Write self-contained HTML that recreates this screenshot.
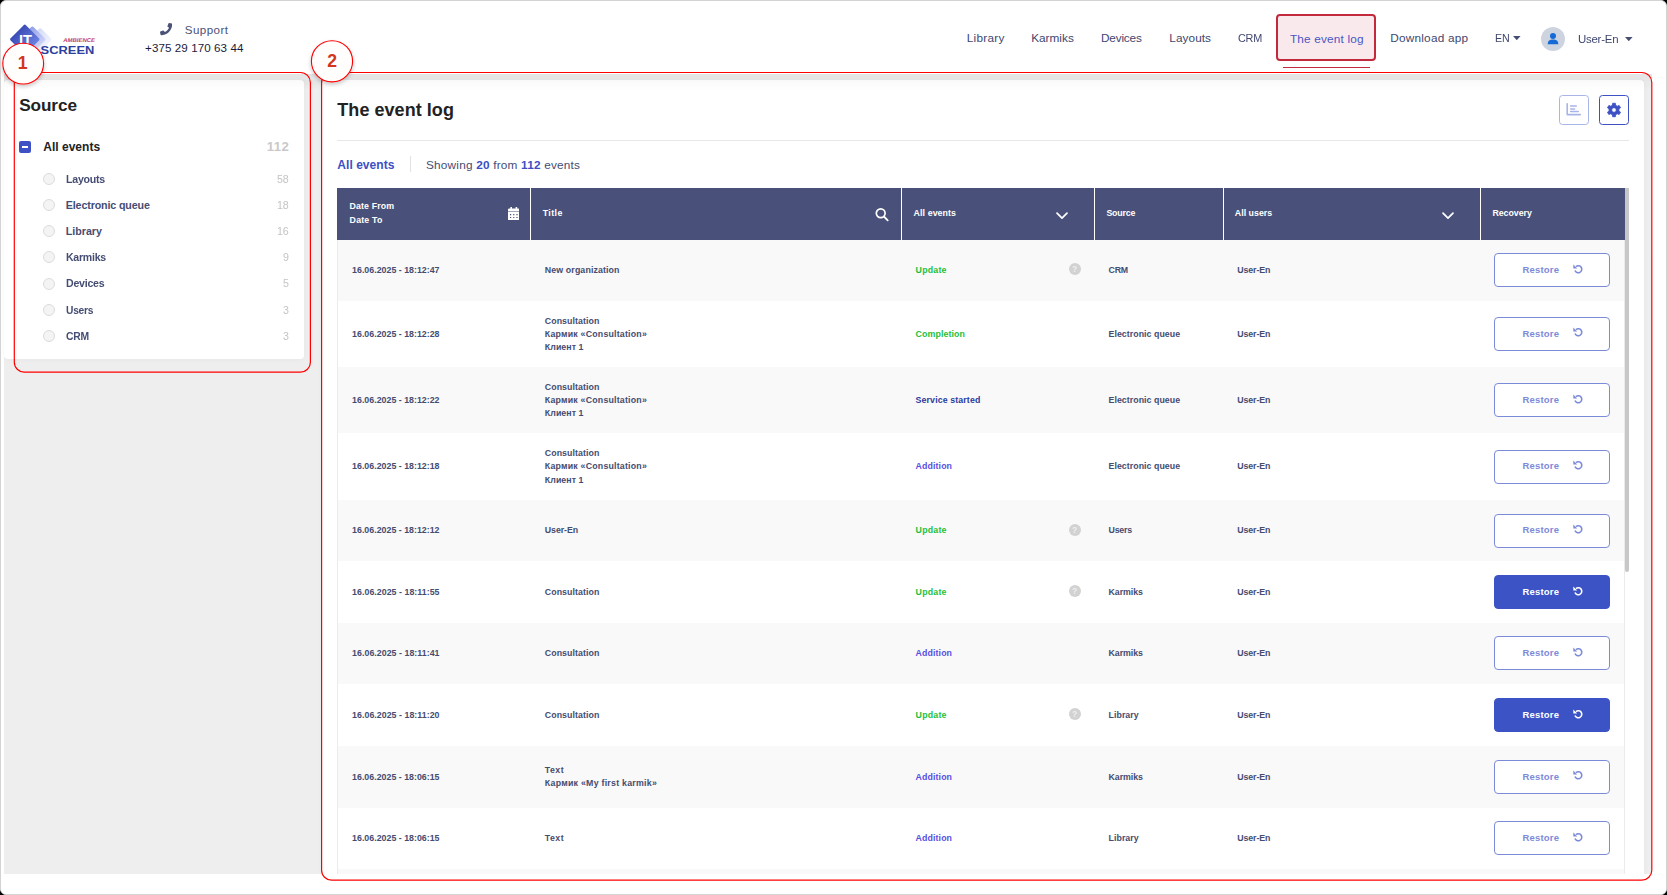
<!DOCTYPE html>
<html lang="en"><head><meta charset="utf-8"><title>The event log</title>
<style>
html,body{margin:0;padding:0;background:#000;}
body{width:1667px;height:895px;overflow:hidden;position:relative;font-family:"Liberation Sans",sans-serif;}
#frame{position:absolute;left:0;top:0;width:1665px;height:893px;border:1px solid #d3d3d3;border-radius:6px;background:#fff;overflow:hidden;}
#page{position:absolute;left:-1px;top:-1px;width:1667px;height:895px;}
.a{position:absolute;display:block;}
.t{position:absolute;white-space:pre;transform-origin:0 50%;display:block;}
.t b{font-weight:700;}
#bg{position:absolute;left:4px;top:74px;width:1648px;height:800px;background:#eeeeee;overflow:hidden;}
#side{position:absolute;left:4px;top:80px;width:300px;height:279px;background:#fff;border-radius:4px;box-shadow:0 0 6px rgba(0,0,0,.04);}
#main{position:absolute;left:322px;top:80px;width:1322px;height:820px;background:#fff;border-radius:4px;box-shadow:0 0 6px rgba(0,0,0,.04);}
.row{position:absolute;left:337px;width:1288px;}
.btn{position:absolute;left:1494px;width:114px;height:32px;border:1px solid #7c8bd9;border-radius:4px;background:#fff;}
.btn.f{background:#3c53c6;border-color:#3c53c6;}
.radio{position:absolute;left:43px;width:10px;height:10px;border:1px solid #dcdcdc;border-radius:50%;background:#f4f4f4;}
.help{position:absolute;left:1068.7px;width:12px;height:12px;border-radius:50%;background:#d2d2d2;color:#efefef;font-size:8.5px;font-weight:700;line-height:12px;text-align:center;}
.sep{position:absolute;top:188px;width:1.4px;height:51.8px;background:#fff;}
</style></head><body>
<div id="frame"><div id="page">

<div id="bg"><div class="a" style="left:0;top:0;width:1648px;height:16px;background:linear-gradient(rgba(0,0,0,.045),rgba(0,0,0,0))"></div></div>
<aside id="side"></aside>
<main id="main" style="height:794px;border-radius:4px 4px 0 0"></main>
<div class="a" style="left:4px;top:80px;width:1640px;height:10px;background:linear-gradient(rgba(0,0,0,.022),rgba(0,0,0,0));pointer-events:none"></div>
<svg class="a" style="left:4px;top:14px" width="100" height="50" viewBox="4 14 100 50">
<defs><linearGradient id="g1" x1="0" y1="0" x2="1" y2="0"><stop offset="0" stop-color="#3a4cb6"/><stop offset="1" stop-color="#6b80e2"/></linearGradient>
<linearGradient id="g2" x1="0" y1="0" x2="1" y2="0"><stop offset="0" stop-color="#93a0e8"/><stop offset="1" stop-color="#cdd4f6"/></linearGradient>
<linearGradient id="g3" x1="0" y1="0" x2="1" y2="0"><stop offset="0" stop-color="#d5dbf8"/><stop offset="1" stop-color="#f1f3fd"/></linearGradient></defs>
<rect x="-8.5" y="-8.5" width="17" height="17" rx="1.6" transform="translate(40.2 39.6) rotate(45)" fill="url(#g3)"/>
<rect x="-9.6" y="-9.6" width="19.2" height="19.2" rx="1.6" transform="translate(32.4 39.5) rotate(45)" fill="url(#g2)"/>
<rect x="-10.8" y="-10.8" width="21.6" height="21.6" rx="1.6" transform="translate(24.8 39.3) rotate(45)" fill="url(#g1)"/>
<text x="19.0" y="46.6" font-family="Liberation Sans,sans-serif" font-weight="700" font-size="16.5" fill="#fff" textLength="13" lengthAdjust="spacingAndGlyphs">IT</text>
<text x="63.1" y="41.9" font-family="Liberation Sans,sans-serif" font-weight="700" font-size="5.6" fill="#c2405c" transform="translate(8 0) skewX(-11)" textLength="31.8" lengthAdjust="spacingAndGlyphs">AMBIENCE</text>
<text x="40.6" y="53.9" font-family="Liberation Sans,sans-serif" font-weight="700" font-size="11.2" fill="#2c409f" textLength="53.7" lengthAdjust="spacingAndGlyphs">SCREEN</text>
</svg>
<svg class="a" style="left:160.2px;top:23.4px" width="12.2" height="12.2" viewBox="0 0 512 512"><path fill="#4a5278" d="M493.4 24.6l-104-24c-11.3-2.6-22.9 3.3-27.5 13.9l-48 112c-4.2 9.8-1.4 21.3 6.9 28l60.6 49.6c-36 76.7-98.9 140.5-177.2 177.2l-49.6-60.6c-6.8-8.3-18.2-11.1-28-6.9l-112 48C3.9 366.5-2 378.1.6 389.4l24 104C27.1 504.2 36.7 512 48 512c256.1 0 464-207.5 464-464 0-11.2-7.7-20.9-18.6-23.4z"/></svg>
<div class="a" style="left:1276px;top:14px;width:96px;height:42.7px;border:2px solid #c2293d;border-radius:4px;background:#f9e9ed"></div>
<div class="a" style="left:1283px;top:66.7px;width:87px;height:1px;background:#c2293d"></div>
<svg class="a" style="left:1513.4px;top:36px" width="7.6" height="4.2" viewBox="0 0 7.6 4.2"><path d="M0 0H7.6L3.8 4.2Z" fill="#454d73"/></svg>
<svg class="a" style="left:1625.4px;top:36.8px" width="7.6" height="4.2" viewBox="0 0 7.6 4.2"><path d="M0 0H7.6L3.8 4.2Z" fill="#454d73"/></svg>
<svg class="a" style="left:1541px;top:27px" width="24" height="24" viewBox="0 0 24 24"><circle cx="12" cy="12" r="12" fill="#ced4df"/>
<circle cx="12" cy="8.9" r="3.0" fill="#166ad8"/><path d="M6.7 17.3 C6.7 13.6 9 12.6 12 12.6 S17.3 13.6 17.3 17.3Z" fill="#166ad8"/></svg>
<div class="a" style="left:19.2px;top:140.8px;width:12px;height:12px;border-radius:2px;background:#3d50c4"></div>
<div class="a" style="left:22.4px;top:146px;width:5.6px;height:1.8px;background:#fff"></div>
<div class="radio" style="top:173.00px"></div>
<div class="radio" style="top:199.15px"></div>
<div class="radio" style="top:225.30px"></div>
<div class="radio" style="top:251.45px"></div>
<div class="radio" style="top:277.60px"></div>
<div class="radio" style="top:303.75px"></div>
<div class="radio" style="top:329.90px"></div>
<div class="a" style="left:337px;top:140px;width:1292px;height:1px;background:#e7e7e7"></div>
<div class="a" style="left:410px;top:156.3px;width:1px;height:16px;background:#e2e2e2"></div>
<div class="a" style="left:1559px;top:95px;width:28px;height:28px;border:1px solid #a9b4e7;border-radius:3.5px;background:#fff"></div>
<svg class="a" style="left:1566px;top:103px" width="15" height="14" viewBox="0 0 15 14"><path d="M1.2 0.8 V11.6 H14.3" fill="none" stroke="#a9b4e7" stroke-width="1.6" stroke-linecap="round" stroke-linejoin="round"/><path d="M4.6 3.1H10.3 M4.6 5.9H8.6 M4.6 8.6H12.2" stroke="#a9b4e7" stroke-width="1.5" stroke-linecap="round"/></svg>
<div class="a" style="left:1599px;top:95px;width:28px;height:28px;border:1px solid #3d50c4;border-radius:3.5px;background:#fff"></div>
<svg class="a" style="left:1604px;top:100px" width="20" height="20" viewBox="0 0 20 20"><path fill-rule="evenodd" fill="#3d50c4" stroke="#3d50c4" stroke-width="0.8" stroke-linejoin="round" d="M8.33 5.29 L8.63 3.24 L11.37 3.24 L11.67 5.29 L13.25 6.20 L15.17 5.43 L16.54 7.81 L14.92 9.09 L14.92 10.91 L16.54 12.19 L15.17 14.57 L13.25 13.80 L11.67 14.71 L11.37 16.76 L8.63 16.76 L8.33 14.71 L6.75 13.80 L4.83 14.57 L3.46 12.19 L5.08 10.91 L5.08 9.09 L3.46 7.81 L4.83 5.43 L6.75 6.20Z M7.70 10.00 a2.3 2.3 0 1 0 4.6 0 a2.3 2.3 0 1 0 -4.6 0Z"/></svg>
<div class="a" style="left:337px;top:188px;width:1288px;height:51.8px;background:#49517a"></div>
<div class="sep" style="left:529.8px"></div>
<div class="sep" style="left:900.8px"></div>
<div class="sep" style="left:1093.6px"></div>
<div class="sep" style="left:1222.8px"></div>
<div class="sep" style="left:1479.7px"></div>
<div class="row" style="top:239.8px;height:60.9px;background:#f9f9f9"></div>
<div class="row" style="top:300.7px;height:66.3px;background:#ffffff"></div>
<div class="row" style="top:367.0px;height:66.1px;background:#f9f9f9"></div>
<div class="row" style="top:433.1px;height:66.9px;background:#ffffff"></div>
<div class="row" style="top:500.0px;height:61.0px;background:#f9f9f9"></div>
<div class="row" style="top:561.0px;height:61.8px;background:#ffffff"></div>
<div class="row" style="top:622.8px;height:61.2px;background:#f9f9f9"></div>
<div class="row" style="top:684.0px;height:62.0px;background:#ffffff"></div>
<div class="row" style="top:746.0px;height:61.5px;background:#f9f9f9"></div>
<div class="row" style="top:807.5px;height:61.5px;background:#ffffff"></div>
<div class="row" style="top:869.0px;height:62.0px;background:#f9f9f9"></div>
<div class="a" style="left:337px;top:239.8px;width:1px;height:640px;background:#ebebeb"></div>
<div class="a" style="left:1624px;top:239.8px;width:1px;height:640px;background:#ebebeb"></div>
<div class="a" style="left:1625.4px;top:188px;width:3.6px;height:384px;background:#c7c7c7;border-radius:0 0 2px 2px"></div>
<svg class="a" style="left:507.8px;top:206.8px" width="11.6" height="13.4" viewBox="0 0 11.6 13.4"><path fill="#fff" fill-rule="evenodd" d="M2.4 0h1.6v1.6h3.6V0h1.6v1.6h1.2a1.2 1.2 0 0 1 1.2 1.2v1.6H0V2.8a1.2 1.2 0 0 1 1.2-1.2h1.2zM0 5h11.6v7.2a1.2 1.2 0 0 1-1.2 1.2H1.2a1.2 1.2 0 0 1-1.2-1.2zM2.0 7.0h1.2v1.2h-1.2zM5.2 7.0h1.2v1.2h-1.2zM8.4 7.0h1.2v1.2h-1.2zM2.0 9.9h1.2v1.2h-1.2zM5.2 9.9h1.2v1.2h-1.2zM8.4 9.9h1.2v1.2h-1.2z"/></svg>
<svg class="a" style="left:874px;top:207px" width="16" height="16" viewBox="0 0 16 16"><circle cx="6.7" cy="6.3" r="4.4" fill="none" stroke="#fff" stroke-width="1.7"/><path d="M9.9 9.5L13.7 13.3" stroke="#fff" stroke-width="1.8" stroke-linecap="round"/></svg>
<svg class="a" style="left:1054.8px;top:210.6px" width="14" height="10" viewBox="0 0 14 10"><path d="M2 2.2L7 7.2L12 2.2" fill="none" stroke="#fff" stroke-width="1.7" stroke-linecap="round" stroke-linejoin="round"/></svg>
<svg class="a" style="left:1441.2px;top:210.6px" width="14" height="10" viewBox="0 0 14 10"><path d="M2 2.2L7 7.2L12 2.2" fill="none" stroke="#fff" stroke-width="1.7" stroke-linecap="round" stroke-linejoin="round"/></svg>
<div class="help" style="top:263.25px">?</div>
<div class="btn" style="top:253.25px"></div>
<svg class="a" style="left:1572.6px;top:263.85px" width="10" height="10" viewBox="0 0 10 10"><path d="M3.0 2.6 A3.5 3.5 0 1 1 2.0 6.5" fill="none" stroke="#7c8bd9" stroke-width="1.6" stroke-linecap="butt"/><path d="M0.3 0.5 L0.3 4.4 L4.2 4.4 Z" fill="#7c8bd9"/></svg>
<div class="btn" style="top:316.85px"></div>
<svg class="a" style="left:1572.6px;top:327.45px" width="10" height="10" viewBox="0 0 10 10"><path d="M3.0 2.6 A3.5 3.5 0 1 1 2.0 6.5" fill="none" stroke="#7c8bd9" stroke-width="1.6" stroke-linecap="butt"/><path d="M0.3 0.5 L0.3 4.4 L4.2 4.4 Z" fill="#7c8bd9"/></svg>
<div class="btn" style="top:383.05px"></div>
<svg class="a" style="left:1572.6px;top:393.65px" width="10" height="10" viewBox="0 0 10 10"><path d="M3.0 2.6 A3.5 3.5 0 1 1 2.0 6.5" fill="none" stroke="#7c8bd9" stroke-width="1.6" stroke-linecap="butt"/><path d="M0.3 0.5 L0.3 4.4 L4.2 4.4 Z" fill="#7c8bd9"/></svg>
<div class="btn" style="top:449.55px"></div>
<svg class="a" style="left:1572.6px;top:460.15px" width="10" height="10" viewBox="0 0 10 10"><path d="M3.0 2.6 A3.5 3.5 0 1 1 2.0 6.5" fill="none" stroke="#7c8bd9" stroke-width="1.6" stroke-linecap="butt"/><path d="M0.3 0.5 L0.3 4.4 L4.2 4.4 Z" fill="#7c8bd9"/></svg>
<div class="help" style="top:523.50px">?</div>
<div class="btn" style="top:513.50px"></div>
<svg class="a" style="left:1572.6px;top:524.1px" width="10" height="10" viewBox="0 0 10 10"><path d="M3.0 2.6 A3.5 3.5 0 1 1 2.0 6.5" fill="none" stroke="#7c8bd9" stroke-width="1.6" stroke-linecap="butt"/><path d="M0.3 0.5 L0.3 4.4 L4.2 4.4 Z" fill="#7c8bd9"/></svg>
<div class="help" style="top:584.90px">?</div>
<div class="btn f" style="top:574.90px"></div>
<svg class="a" style="left:1572.6px;top:585.5px" width="10" height="10" viewBox="0 0 10 10"><path d="M3.0 2.6 A3.5 3.5 0 1 1 2.0 6.5" fill="none" stroke="#fff" stroke-width="1.6" stroke-linecap="butt"/><path d="M0.3 0.5 L0.3 4.4 L4.2 4.4 Z" fill="#fff"/></svg>
<div class="btn" style="top:636.40px"></div>
<svg class="a" style="left:1572.6px;top:647.0px" width="10" height="10" viewBox="0 0 10 10"><path d="M3.0 2.6 A3.5 3.5 0 1 1 2.0 6.5" fill="none" stroke="#7c8bd9" stroke-width="1.6" stroke-linecap="butt"/><path d="M0.3 0.5 L0.3 4.4 L4.2 4.4 Z" fill="#7c8bd9"/></svg>
<div class="help" style="top:708.00px">?</div>
<div class="btn f" style="top:698.00px"></div>
<svg class="a" style="left:1572.6px;top:708.6px" width="10" height="10" viewBox="0 0 10 10"><path d="M3.0 2.6 A3.5 3.5 0 1 1 2.0 6.5" fill="none" stroke="#fff" stroke-width="1.6" stroke-linecap="butt"/><path d="M0.3 0.5 L0.3 4.4 L4.2 4.4 Z" fill="#fff"/></svg>
<div class="btn" style="top:759.75px"></div>
<svg class="a" style="left:1572.6px;top:770.35px" width="10" height="10" viewBox="0 0 10 10"><path d="M3.0 2.6 A3.5 3.5 0 1 1 2.0 6.5" fill="none" stroke="#7c8bd9" stroke-width="1.6" stroke-linecap="butt"/><path d="M0.3 0.5 L0.3 4.4 L4.2 4.4 Z" fill="#7c8bd9"/></svg>
<div class="btn" style="top:821.25px"></div>
<svg class="a" style="left:1572.6px;top:831.85px" width="10" height="10" viewBox="0 0 10 10"><path d="M3.0 2.6 A3.5 3.5 0 1 1 2.0 6.5" fill="none" stroke="#7c8bd9" stroke-width="1.6" stroke-linecap="butt"/><path d="M0.3 0.5 L0.3 4.4 L4.2 4.4 Z" fill="#7c8bd9"/></svg>
<div class="a" style="left:1px;top:874px;width:1665px;height:20px;background:#fff"></div>
<span class="t" style="left:184.70px;top:22px;font-size:11.6px;line-height:16px;letter-spacing:0.465px;color:#4a5278;">Support</span>
<span class="t" style="left:145.10px;top:40px;font-size:11.6px;line-height:16px;letter-spacing:0.079px;color:#1b1b3a;">+375 29 170 63 44</span>
<span class="t" style="left:966.70px;top:30px;font-size:11.8px;line-height:17px;letter-spacing:0.256px;color:#40476f;">Library</span>
<span class="t" style="left:1031.20px;top:30px;font-size:11.8px;line-height:17px;letter-spacing:-0.002px;color:#40476f;">Karmiks</span>
<span class="t" style="left:1100.90px;top:30px;font-size:11.8px;line-height:17px;letter-spacing:-0.161px;color:#40476f;">Devices</span>
<span class="t" style="left:1169.30px;top:30px;font-size:11.8px;line-height:17px;letter-spacing:0.062px;color:#40476f;">Layouts</span>
<span class="t" style="left:1238.20px;top:30px;font-size:11.8px;line-height:17px;letter-spacing:-0.250px;color:#40476f;transform:scaleX(0.9213);">CRM</span>
<span class="t" style="left:1290.00px;top:31px;font-size:11.8px;line-height:17px;letter-spacing:0.168px;color:#4a56c2;">The event log</span>
<span class="t" style="left:1390.30px;top:30px;font-size:11.8px;line-height:17px;letter-spacing:0.206px;color:#40476f;">Download app</span>
<span class="t" style="left:1495.40px;top:30px;font-size:11.8px;line-height:17px;letter-spacing:-0.250px;color:#40476f;transform:scaleX(0.9045);">EN</span>
<span class="t" style="left:1577.50px;top:31px;font-size:11.8px;line-height:17px;letter-spacing:-0.250px;color:#40476f;transform:scaleX(0.9697);">User-En</span>
<span class="t" style="left:19.20px;top:93px;font-size:17.2px;line-height:24px;letter-spacing:-0.096px;color:#222222;font-weight:700;">Source</span>
<span class="t" style="left:43.20px;top:139px;font-size:12.0px;line-height:17px;letter-spacing:0.022px;color:#222222;font-weight:700;">All events</span>
<span class="t" style="left:266.80px;top:138px;font-size:13.2px;line-height:18px;letter-spacing:0.409px;color:#c9c9c9;font-weight:700;">112</span>
<span class="t" style="left:65.80px;top:172px;font-size:10.7px;line-height:15px;letter-spacing:-0.250px;color:#454d73;font-weight:700;transform:scaleX(0.9928);">Layouts</span>
<span class="t" style="left:277.20px;top:172px;font-size:10.8px;line-height:15px;letter-spacing:-0.250px;color:#c4c4c4;transform:scaleX(0.9859);">58</span>
<span class="t" style="left:65.80px;top:198px;font-size:10.7px;line-height:15px;letter-spacing:-0.135px;color:#454d73;font-weight:700;">Electronic queue</span>
<span class="t" style="left:277.20px;top:198px;font-size:10.8px;line-height:15px;letter-spacing:-0.250px;color:#c4c4c4;transform:scaleX(0.9859);">18</span>
<span class="t" style="left:65.80px;top:224px;font-size:10.7px;line-height:15px;letter-spacing:-0.022px;color:#454d73;font-weight:700;">Library</span>
<span class="t" style="left:277.20px;top:224px;font-size:10.8px;line-height:15px;letter-spacing:-0.250px;color:#c4c4c4;transform:scaleX(0.9859);">16</span>
<span class="t" style="left:65.80px;top:250px;font-size:10.7px;line-height:15px;letter-spacing:-0.250px;color:#454d73;font-weight:700;transform:scaleX(0.9856);">Karmiks</span>
<span class="t" style="left:282.78px;top:250px;font-size:10.8px;line-height:15px;letter-spacing:-0.250px;color:#c4c4c4;transform:scaleX(0.9859);">9</span>
<span class="t" style="left:65.80px;top:276px;font-size:10.7px;line-height:15px;letter-spacing:-0.250px;color:#454d73;font-weight:700;transform:scaleX(0.9917);">Devices</span>
<span class="t" style="left:282.78px;top:276px;font-size:10.8px;line-height:15px;letter-spacing:-0.250px;color:#c4c4c4;transform:scaleX(0.9859);">5</span>
<span class="t" style="left:65.80px;top:303px;font-size:10.7px;line-height:15px;letter-spacing:-0.250px;color:#454d73;font-weight:700;transform:scaleX(0.9576);">Users</span>
<span class="t" style="left:282.78px;top:303px;font-size:10.8px;line-height:15px;letter-spacing:-0.250px;color:#c4c4c4;transform:scaleX(0.9859);">3</span>
<span class="t" style="left:65.80px;top:329px;font-size:10.7px;line-height:15px;letter-spacing:-0.250px;color:#454d73;font-weight:700;transform:scaleX(0.9688);">CRM</span>
<span class="t" style="left:282.78px;top:329px;font-size:10.8px;line-height:15px;letter-spacing:-0.250px;color:#c4c4c4;transform:scaleX(0.9859);">3</span>
<span class="t" style="left:337.30px;top:98px;font-size:18.0px;line-height:25px;letter-spacing:0.049px;color:#222222;font-weight:700;">The event log</span>
<span class="t" style="left:337.30px;top:157px;font-size:12.0px;line-height:17px;letter-spacing:0.044px;color:#3c4fc4;font-weight:700;">All events</span>
<span class="t" style="left:426.00px;top:157px;font-size:11.8px;line-height:17px;letter-spacing:0.200px;color:#454d73;">Showing <b style="color:#3c4fc4">20</b> from <b style="color:#3c4fc4">112</b> events</span>
<span class="t" style="left:349.60px;top:200px;font-size:8.8px;line-height:12px;letter-spacing:0.111px;color:#fff;font-weight:700;">Date From</span>
<span class="t" style="left:349.60px;top:214px;font-size:8.8px;line-height:12px;letter-spacing:0.198px;color:#fff;font-weight:700;">Date To</span>
<span class="t" style="left:542.70px;top:207px;font-size:8.8px;line-height:12px;letter-spacing:0.441px;color:#fff;font-weight:700;">Title</span>
<span class="t" style="left:913.60px;top:207px;font-size:8.8px;line-height:12px;letter-spacing:0.093px;color:#fff;font-weight:700;">All events</span>
<span class="t" style="left:1106.40px;top:207px;font-size:8.8px;line-height:12px;letter-spacing:-0.166px;color:#fff;font-weight:700;">Source</span>
<span class="t" style="left:1234.80px;top:207px;font-size:8.8px;line-height:12px;letter-spacing:0.029px;color:#fff;font-weight:700;">All users</span>
<span class="t" style="left:1492.40px;top:207px;font-size:8.8px;line-height:12px;letter-spacing:-0.032px;color:#fff;font-weight:700;">Recovery</span>
<span class="t" style="left:352.10px;top:264px;font-size:8.8px;line-height:12px;letter-spacing:0.017px;color:#454c70;font-weight:700;">16.06.2025 - 18:12:47</span>
<span class="t" style="left:544.80px;top:264px;font-size:8.8px;line-height:12px;letter-spacing:0.125px;color:#454c70;font-weight:700;">New organization</span>
<span class="t" style="left:915.60px;top:264px;font-size:8.8px;line-height:12px;letter-spacing:0.214px;color:#1cc040;font-weight:700;">Update</span>
<span class="t" style="left:1108.50px;top:264px;font-size:8.8px;line-height:12px;letter-spacing:-0.173px;color:#454c70;font-weight:700;">CRM</span>
<span class="t" style="left:1237.20px;top:264px;font-size:8.8px;line-height:12px;letter-spacing:-0.072px;color:#454c70;font-weight:700;">User-En</span>
<span class="t" style="left:1522.40px;top:263px;font-size:9.5px;line-height:13px;letter-spacing:0.204px;color:#7c8bd9;font-weight:700;">Restore</span>
<span class="t" style="left:352.10px;top:328px;font-size:8.8px;line-height:12px;letter-spacing:0.017px;color:#454c70;font-weight:700;">16.06.2025 - 18:12:28</span>
<span class="t" style="left:544.80px;top:315px;font-size:8.8px;line-height:12px;letter-spacing:0.076px;color:#454c70;font-weight:700;">Consultation</span>
<span class="t" style="left:544.80px;top:328px;font-size:8.8px;line-height:12px;letter-spacing:0.203px;color:#454c70;font-weight:700;">Кармик «Consultation»</span>
<span class="t" style="left:544.80px;top:341px;font-size:8.8px;line-height:12px;letter-spacing:0.069px;color:#454c70;font-weight:700;">Клиент 1</span>
<span class="t" style="left:915.60px;top:328px;font-size:8.8px;line-height:12px;letter-spacing:0.090px;color:#1cc040;font-weight:700;">Completion</span>
<span class="t" style="left:1108.50px;top:328px;font-size:8.8px;line-height:12px;letter-spacing:0.047px;color:#454c70;font-weight:700;">Electronic queue</span>
<span class="t" style="left:1237.20px;top:328px;font-size:8.8px;line-height:12px;letter-spacing:-0.072px;color:#454c70;font-weight:700;">User-En</span>
<span class="t" style="left:1522.40px;top:327px;font-size:9.5px;line-height:13px;letter-spacing:0.204px;color:#7c8bd9;font-weight:700;">Restore</span>
<span class="t" style="left:352.10px;top:394px;font-size:8.8px;line-height:12px;letter-spacing:0.017px;color:#454c70;font-weight:700;">16.06.2025 - 18:12:22</span>
<span class="t" style="left:544.80px;top:381px;font-size:8.8px;line-height:12px;letter-spacing:0.076px;color:#454c70;font-weight:700;">Consultation</span>
<span class="t" style="left:544.80px;top:394px;font-size:8.8px;line-height:12px;letter-spacing:0.203px;color:#454c70;font-weight:700;">Кармик «Consultation»</span>
<span class="t" style="left:544.80px;top:407px;font-size:8.8px;line-height:12px;letter-spacing:0.069px;color:#454c70;font-weight:700;">Клиент 1</span>
<span class="t" style="left:915.60px;top:394px;font-size:8.8px;line-height:12px;letter-spacing:0.115px;color:#2c3b9e;font-weight:700;">Service started</span>
<span class="t" style="left:1108.50px;top:394px;font-size:8.8px;line-height:12px;letter-spacing:0.047px;color:#454c70;font-weight:700;">Electronic queue</span>
<span class="t" style="left:1237.20px;top:394px;font-size:8.8px;line-height:12px;letter-spacing:-0.072px;color:#454c70;font-weight:700;">User-En</span>
<span class="t" style="left:1522.40px;top:393px;font-size:9.5px;line-height:13px;letter-spacing:0.204px;color:#7c8bd9;font-weight:700;">Restore</span>
<span class="t" style="left:352.10px;top:460px;font-size:8.8px;line-height:12px;letter-spacing:0.017px;color:#454c70;font-weight:700;">16.06.2025 - 18:12:18</span>
<span class="t" style="left:544.80px;top:447px;font-size:8.8px;line-height:12px;letter-spacing:0.076px;color:#454c70;font-weight:700;">Consultation</span>
<span class="t" style="left:544.80px;top:460px;font-size:8.8px;line-height:12px;letter-spacing:0.203px;color:#454c70;font-weight:700;">Кармик «Consultation»</span>
<span class="t" style="left:544.80px;top:474px;font-size:8.8px;line-height:12px;letter-spacing:0.069px;color:#454c70;font-weight:700;">Клиент 1</span>
<span class="t" style="left:915.60px;top:460px;font-size:8.8px;line-height:12px;letter-spacing:0.104px;color:#5a50e0;font-weight:700;">Addition</span>
<span class="t" style="left:1108.50px;top:460px;font-size:8.8px;line-height:12px;letter-spacing:0.047px;color:#454c70;font-weight:700;">Electronic queue</span>
<span class="t" style="left:1237.20px;top:460px;font-size:8.8px;line-height:12px;letter-spacing:-0.072px;color:#454c70;font-weight:700;">User-En</span>
<span class="t" style="left:1522.40px;top:459px;font-size:9.5px;line-height:13px;letter-spacing:0.204px;color:#7c8bd9;font-weight:700;">Restore</span>
<span class="t" style="left:352.10px;top:524px;font-size:8.8px;line-height:12px;letter-spacing:0.017px;color:#454c70;font-weight:700;">16.06.2025 - 18:12:12</span>
<span class="t" style="left:544.80px;top:524px;font-size:8.8px;line-height:12px;letter-spacing:-0.072px;color:#454c70;font-weight:700;">User-En</span>
<span class="t" style="left:915.60px;top:524px;font-size:8.8px;line-height:12px;letter-spacing:0.214px;color:#1cc040;font-weight:700;">Update</span>
<span class="t" style="left:1108.50px;top:524px;font-size:8.8px;line-height:12px;letter-spacing:-0.217px;color:#454c70;font-weight:700;">Users</span>
<span class="t" style="left:1237.20px;top:524px;font-size:8.8px;line-height:12px;letter-spacing:-0.072px;color:#454c70;font-weight:700;">User-En</span>
<span class="t" style="left:1522.40px;top:523px;font-size:9.5px;line-height:13px;letter-spacing:0.204px;color:#7c8bd9;font-weight:700;">Restore</span>
<span class="t" style="left:352.10px;top:586px;font-size:8.8px;line-height:12px;letter-spacing:0.041px;color:#454c70;font-weight:700;">16.06.2025 - 18:11:55</span>
<span class="t" style="left:544.80px;top:586px;font-size:8.8px;line-height:12px;letter-spacing:0.076px;color:#454c70;font-weight:700;">Consultation</span>
<span class="t" style="left:915.60px;top:586px;font-size:8.8px;line-height:12px;letter-spacing:0.214px;color:#1cc040;font-weight:700;">Update</span>
<span class="t" style="left:1108.50px;top:586px;font-size:8.8px;line-height:12px;letter-spacing:-0.056px;color:#454c70;font-weight:700;">Karmiks</span>
<span class="t" style="left:1237.20px;top:586px;font-size:8.8px;line-height:12px;letter-spacing:-0.072px;color:#454c70;font-weight:700;">User-En</span>
<span class="t" style="left:1522.40px;top:585px;font-size:9.5px;line-height:13px;letter-spacing:0.204px;color:#fff;font-weight:700;">Restore</span>
<span class="t" style="left:352.10px;top:647px;font-size:8.8px;line-height:12px;letter-spacing:0.041px;color:#454c70;font-weight:700;">16.06.2025 - 18:11:41</span>
<span class="t" style="left:544.80px;top:647px;font-size:8.8px;line-height:12px;letter-spacing:0.076px;color:#454c70;font-weight:700;">Consultation</span>
<span class="t" style="left:915.60px;top:647px;font-size:8.8px;line-height:12px;letter-spacing:0.104px;color:#5a50e0;font-weight:700;">Addition</span>
<span class="t" style="left:1108.50px;top:647px;font-size:8.8px;line-height:12px;letter-spacing:-0.056px;color:#454c70;font-weight:700;">Karmiks</span>
<span class="t" style="left:1237.20px;top:647px;font-size:8.8px;line-height:12px;letter-spacing:-0.072px;color:#454c70;font-weight:700;">User-En</span>
<span class="t" style="left:1522.40px;top:646px;font-size:9.5px;line-height:13px;letter-spacing:0.204px;color:#7c8bd9;font-weight:700;">Restore</span>
<span class="t" style="left:352.10px;top:709px;font-size:8.8px;line-height:12px;letter-spacing:0.041px;color:#454c70;font-weight:700;">16.06.2025 - 18:11:20</span>
<span class="t" style="left:544.80px;top:709px;font-size:8.8px;line-height:12px;letter-spacing:0.076px;color:#454c70;font-weight:700;">Consultation</span>
<span class="t" style="left:915.60px;top:709px;font-size:8.8px;line-height:12px;letter-spacing:0.214px;color:#1cc040;font-weight:700;">Update</span>
<span class="t" style="left:1108.50px;top:709px;font-size:8.8px;line-height:12px;letter-spacing:0.062px;color:#454c70;font-weight:700;">Library</span>
<span class="t" style="left:1237.20px;top:709px;font-size:8.8px;line-height:12px;letter-spacing:-0.072px;color:#454c70;font-weight:700;">User-En</span>
<span class="t" style="left:1522.40px;top:708px;font-size:9.5px;line-height:13px;letter-spacing:0.204px;color:#fff;font-weight:700;">Restore</span>
<span class="t" style="left:352.10px;top:771px;font-size:8.8px;line-height:12px;letter-spacing:0.017px;color:#454c70;font-weight:700;">16.06.2025 - 18:06:15</span>
<span class="t" style="left:544.80px;top:764px;font-size:8.8px;line-height:12px;letter-spacing:0.454px;color:#454c70;font-weight:700;">Text</span>
<span class="t" style="left:544.80px;top:777px;font-size:8.8px;line-height:12px;letter-spacing:0.249px;color:#454c70;font-weight:700;">Кармик «My first karmik»</span>
<span class="t" style="left:915.60px;top:771px;font-size:8.8px;line-height:12px;letter-spacing:0.104px;color:#5a50e0;font-weight:700;">Addition</span>
<span class="t" style="left:1108.50px;top:771px;font-size:8.8px;line-height:12px;letter-spacing:-0.056px;color:#454c70;font-weight:700;">Karmiks</span>
<span class="t" style="left:1237.20px;top:771px;font-size:8.8px;line-height:12px;letter-spacing:-0.072px;color:#454c70;font-weight:700;">User-En</span>
<span class="t" style="left:1522.40px;top:770px;font-size:9.5px;line-height:13px;letter-spacing:0.204px;color:#7c8bd9;font-weight:700;">Restore</span>
<span class="t" style="left:352.10px;top:832px;font-size:8.8px;line-height:12px;letter-spacing:0.017px;color:#454c70;font-weight:700;">16.06.2025 - 18:06:15</span>
<span class="t" style="left:544.80px;top:832px;font-size:8.8px;line-height:12px;letter-spacing:0.454px;color:#454c70;font-weight:700;">Text</span>
<span class="t" style="left:915.60px;top:832px;font-size:8.8px;line-height:12px;letter-spacing:0.104px;color:#5a50e0;font-weight:700;">Addition</span>
<span class="t" style="left:1108.50px;top:832px;font-size:8.8px;line-height:12px;letter-spacing:0.062px;color:#454c70;font-weight:700;">Library</span>
<span class="t" style="left:1237.20px;top:832px;font-size:8.8px;line-height:12px;letter-spacing:-0.072px;color:#454c70;font-weight:700;">User-En</span>
<span class="t" style="left:1522.40px;top:831px;font-size:9.5px;line-height:13px;letter-spacing:0.204px;color:#7c8bd9;font-weight:700;">Restore</span>
<svg class="a" style="left:0;top:0" width="1667" height="895" viewBox="0 0 1667 895">
<defs><filter id="sh" x="-30%" y="-30%" width="160%" height="160%"><feGaussianBlur in="SourceAlpha" stdDeviation="2.2"/><feOffset dy="1.5"/><feComponentTransfer><feFuncA type="linear" slope="0.22"/></feComponentTransfer><feMerge><feMergeNode/><feMergeNode in="SourceGraphic"/></feMerge></filter></defs>
<rect x="14.3" y="72.5" width="296.1" height="299.7" rx="10" fill="none" stroke="#ff0000" stroke-width="1.2"/>
<rect x="321.6" y="72.5" width="1330.2" height="807.7" rx="10" fill="none" stroke="#ff0000" stroke-width="1.2"/>
<circle cx="23.2" cy="63.6" r="20.4" fill="#fffefc" stroke="#ff0000" stroke-width="1.1" filter="url(#sh)"/>
<circle cx="332" cy="61.3" r="20.6" fill="#fffefc" stroke="#ff0000" stroke-width="1.1" filter="url(#sh)"/>
<text x="22.7" y="68.7" text-anchor="middle" font-family="Liberation Sans,sans-serif" font-weight="700" font-size="17.6" fill="#d2361f">1</text>
<text x="332.1" y="66.9" text-anchor="middle" font-family="Liberation Sans,sans-serif" font-weight="700" font-size="17.6" fill="#d2361f">2</text>
</svg>
</div></div></body></html>
